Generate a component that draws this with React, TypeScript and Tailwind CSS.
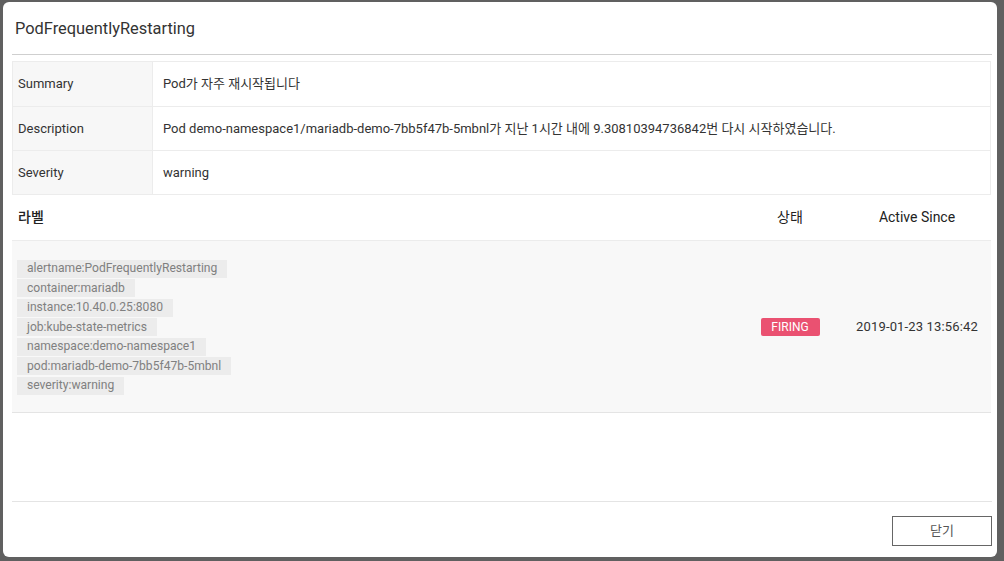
import React from "react";

const details = [
  { key: "Summary", value: "Pod가 자주 재시작됩니다" },
  {
    key: "Description",
    value:
      "Pod demo-namespace1/mariadb-demo-7bb5f47b-5mbnl가 지난 1시간 내에 9.30810394736842번 다시 시작하였습니다.",
  },
  { key: "Severity", value: "warning" },
];

const labels = [
  "alertname:PodFrequentlyRestarting",
  "container:mariadb",
  "instance:10.40.0.25:8080",
  "job:kube-state-metrics",
  "namespace:demo-namespace1",
  "pod:mariadb-demo-7bb5f47b-5mbnl",
  "severity:warning",
];

const App = () => {
  return (
    <div
      className="w-[1004px] h-[561px] bg-[#606060] pt-[2px] pl-[3px] overflow-hidden"
      style={{ fontFamily: 'Roboto, "Noto Sans CJK KR", sans-serif' }}
    >
      <div className="w-[994px] h-[555px] bg-white rounded-[6px] flex flex-col pl-[9px] pr-[5px]">
        {/* Header */}
        <div className="h-[53px] flex items-center pl-[3px] pt-[3px] border-b border-[#cfcfcf]">
          <h1 className="text-[16.4px] text-[#333] leading-none">PodFrequentlyRestarting</h1>
        </div>

        {/* Detail table */}
        <div className="mt-[6px] mr-[1px] border border-[#ececec]">
          {details.map((d, i) => (
            <div
              key={d.key}
              className={`flex h-[44px] ${i > 0 ? "border-t border-[#ececec]" : ""}`}
            >
              <div className="w-[140px] shrink-0 bg-[#f7f7f7] border-r border-[#ececec] flex items-center pl-[5px] text-[13px] text-[#333]">
                {d.key}
              </div>
              <div className="flex-1 flex items-center pl-[10px] text-[13px] text-[#333]">
                {d.value}
              </div>
            </div>
          ))}
        </div>

        {/* Labels table */}
        <div className="mr-[1px]">
          <div className="flex h-[46px] items-center border-b border-[#ececec] text-[14px] text-[#222]">
            <div className="flex-1 pl-[6px] font-medium">라벨</div>
            <div className="w-[106px] text-center">상태</div>
            <div className="w-[148px] text-center">Active Since</div>
          </div>
          <div className="flex items-center h-[172px] bg-[#f8f8f8] border-b border-[#e4e4e4]">
            <div className="flex-1 flex flex-col items-start gap-[1.5px] pl-[5px] pt-[1px]">
              {labels.map((l) => (
                <span
                  key={l}
                  className="h-[18px] flex items-center px-[10px] bg-[#ececec] text-[12.1px] text-[#808080]"
                >
                  {l}
                </span>
              ))}
            </div>
            <div className="w-[106px] flex justify-center">
              <span className="h-[18px] w-[59px] flex items-center justify-center rounded-[2px] bg-[#ea5171] text-white text-[12px]">
                FIRING
              </span>
            </div>
            <div className="w-[148px] text-center text-[13px] tracking-[0.15px] text-[#333]">
              2019-01-23 13:56:42
            </div>
          </div>
        </div>

        <div className="flex-1" />

        {/* Footer */}
        <div className="h-[56px] border-t border-[#e4e4e4] flex justify-end pt-[14px]">
          <button className="w-[100px] h-[30px] border border-[#666] bg-white text-[13px] text-[#555]">
            닫기
          </button>
        </div>
      </div>
    </div>
  );
};

export default App;
